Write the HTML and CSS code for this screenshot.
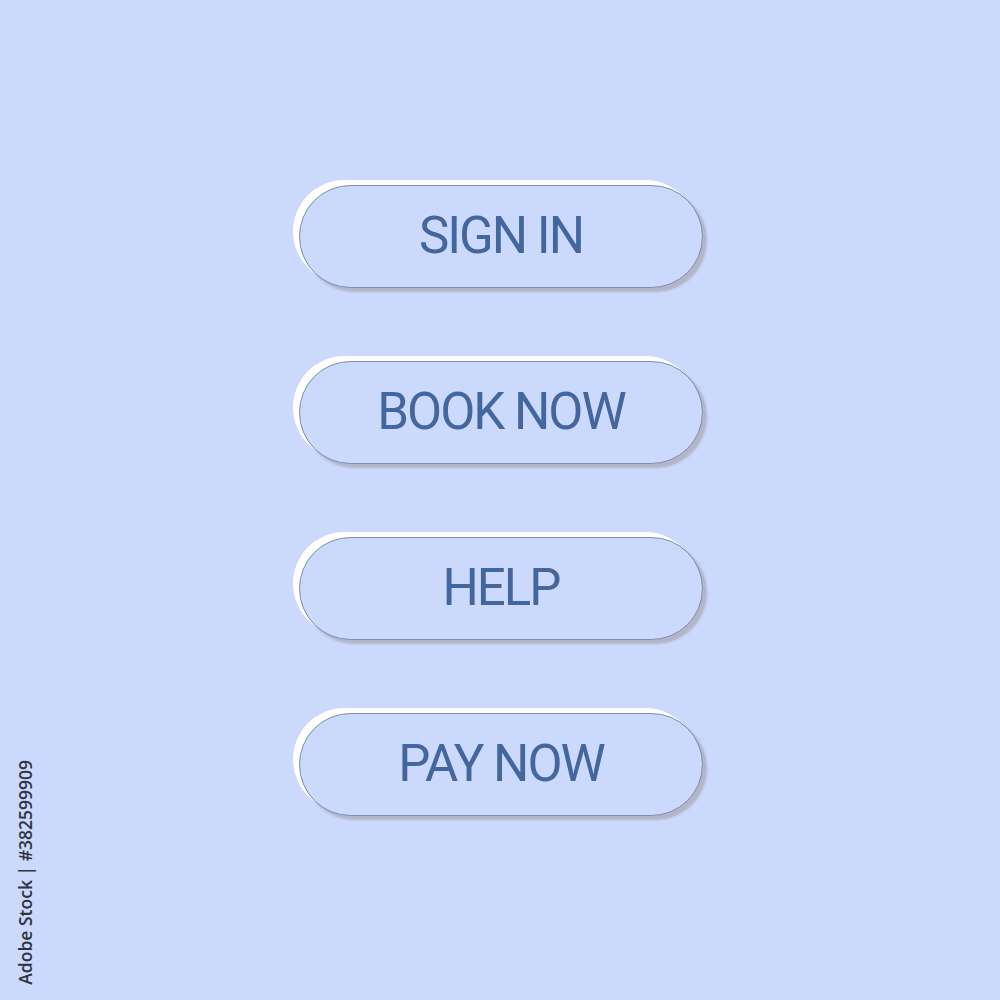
FILE: index.html
```html
<!DOCTYPE html>
<html lang="en">
<head>
    <meta charset="UTF-8">
    <meta name="viewport" content="width=device-width, initial-scale=1.0">
    <title>Buttons</title>
    <link rel="stylesheet" href="styles.css">
</head>
<body>
    <div class="button-stack">
        <button class="pill">SIGN IN</button>
        <button class="pill">BOOK NOW</button>
        <button class="pill">HELP</button>
        <button class="pill">PAY NOW</button>
    </div>

    <div class="stock-id">Adobe Stock | #382599909</div>
</body>
</html>
```

FILE: styles.css
```css
body {
    margin: 0;
    padding: 0;
    width: 1000px;
    height: 1000px;
    background-color: #cbd9fd;
    font-family: Roboto, "Liberation Sans", sans-serif;
    position: relative;
    overflow: hidden;
}

.button-stack {
    display: flex;
    flex-direction: column;
    gap: 73px;
    padding: 185px 0 0 299px;
}

.pill {
    width: 404px;
    height: 103px;
    border-radius: 52px;
    border: 1px solid #7c8cab;
    background-color: #cbd9fd;
    color: #43679d;
    font-family: Roboto, "Liberation Sans", sans-serif;
    font-size: 51px;
    font-weight: 400;
    letter-spacing: -2px;
    padding: 0 0 2px 0;
    box-shadow: -6px -5px 0 0 #ffffff, 4px 4px 2px 0 rgba(160, 160, 165, 0.6);
    cursor: pointer;
}

.stock-id {
    position: absolute;
    left: 13px;
    bottom: 15px;
    writing-mode: vertical-rl;
    transform: rotate(180deg);
    font-family: "Open Sans", sans-serif;
    font-size: 17.5px;
    font-weight: 600;
    color: #2f3440;
}
```
